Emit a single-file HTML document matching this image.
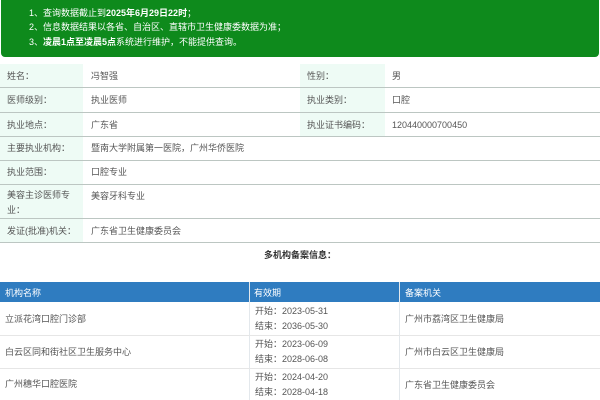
<!DOCTYPE html><html><head><meta charset="utf-8"><style>
*{margin:0;padding:0;box-sizing:border-box}
body{width:600px;height:400px;overflow:hidden;background:#fff;font-family:"Liberation Sans","Noto Sans CJK SC",sans-serif;font-size:9px;color:#555;position:relative}
.ban{position:absolute;left:1px;top:0;width:598px;height:57px;background:#0e8a1c;border-radius:0 0 4px 4px;color:#fff;font-size:9px}
.ban div{position:absolute;left:28px}
.r{position:absolute;left:0;width:600px;border-bottom:1px solid #bcc6c2}
.l{position:absolute;top:0;bottom:0;background:#eefbf5}
.t{position:absolute;line-height:12px}
.hd{position:absolute;top:282px;left:0;width:600px;height:20px;background:#2f7cc0;color:#fff}
.hd span{position:absolute;top:4px}
.vl{position:absolute;top:282px;width:1px;height:118px;background:#e3e8ec}
.br{position:absolute;left:0;width:600px;height:1px;background:#e6e6e6}
</style></head><body>
<div class="ban">
<div style="top:6px">1、查询数据截止到<b>2025年6月29日22时</b>；</div>
<div style="top:20px">2、信息数据结果以各省、自治区、直辖市卫生健康委数据为准；</div>
<div style="top:35px">3、<b>凌晨1点至凌晨5点</b>系统进行维护，不能提供查询。</div>
</div>
<div class="r" style="top:64px;height:24px"><div class="l" style="left:0;width:83px"></div><div class="l" style="left:300px;width:85px"></div>
<span class="t" style="left:7px;top:6px">姓名：</span><span class="t" style="left:91px;top:6px">冯智强</span><span class="t" style="left:307px;top:6px">性别：</span><span class="t" style="left:392px;top:6px">男</span></div>
<div class="r" style="top:88px;height:25px"><div class="l" style="left:0;width:83px"></div><div class="l" style="left:300px;width:85px"></div>
<span class="t" style="left:7px;top:6px">医师级别：</span><span class="t" style="left:91px;top:6px">执业医师</span><span class="t" style="left:307px;top:6px">执业类别：</span><span class="t" style="left:392px;top:6px">口腔</span></div>
<div class="r" style="top:113px;height:24px"><div class="l" style="left:0;width:83px"></div><div class="l" style="left:300px;width:85px"></div>
<span class="t" style="left:7px;top:6px">执业地点：</span><span class="t" style="left:91px;top:6px">广东省</span><span class="t" style="left:307px;top:6px">执业证书编码：</span><span class="t" style="left:392px;top:6px">120440000700450</span></div>
<div class="r" style="top:137px;height:24px"><div class="l" style="left:0;width:83px"></div>
<span class="t" style="left:7px;top:5px">主要执业机构：</span><span class="t" style="left:91px;top:5px">暨南大学附属第一医院，广州华侨医院</span></div>
<div class="r" style="top:161px;height:24px"><div class="l" style="left:0;width:83px"></div>
<span class="t" style="left:7px;top:5px">执业范围：</span><span class="t" style="left:91px;top:5px">口腔专业</span></div>
<div class="r" style="top:185px;height:34px"><div class="l" style="left:0;width:83px"></div>
<span class="t" style="left:7px;top:3px;width:70px;line-height:15px">美容主诊医师专业：</span><span class="t" style="left:91px;top:5px">美容牙科专业</span></div>
<div class="r" style="top:219px;height:24px"><div class="l" style="left:0;width:83px"></div>
<span class="t" style="left:7px;top:6px">发证(批准)机关：</span><span class="t" style="left:91px;top:6px">广东省卫生健康委员会</span></div>
<div class="t" style="left:0;width:600px;text-align:center;top:249px;font-weight:bold;color:#333">多机构备案信息：</div>
<div class="hd"><span style="left:5px">机构名称</span><span style="left:254px">有效期</span><span style="left:405px">备案机关</span></div>
<div class="vl" style="left:249px"></div><div class="vl" style="left:399px"></div>
<div class="br" style="top:335px"></div><div class="br" style="top:368px"></div>
<span class="t" style="left:5px;top:313px">立派花湾口腔门诊部</span>
<span class="t" style="left:255px;top:305px">开始：2023-05-31</span><span class="t" style="left:255px;top:320px">结束：2036-05-30</span>
<span class="t" style="left:405px;top:313px">广州市荔湾区卫生健康局</span>
<span class="t" style="left:5px;top:346px">白云区同和街社区卫生服务中心</span>
<span class="t" style="left:255px;top:338px">开始：2023-06-09</span><span class="t" style="left:255px;top:353px">结束：2028-06-08</span>
<span class="t" style="left:405px;top:346px">广州市白云区卫生健康局</span>
<span class="t" style="left:5px;top:378px">广州穗华口腔医院</span>
<span class="t" style="left:255px;top:371px">开始：2024-04-20</span><span class="t" style="left:255px;top:386px">结束：2028-04-18</span>
<span class="t" style="left:405px;top:379px">广东省卫生健康委员会</span>
</body></html>
